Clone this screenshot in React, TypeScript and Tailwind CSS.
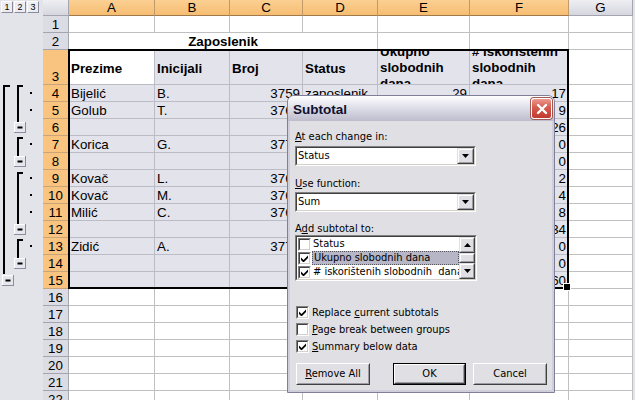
import React from "react";

type Cell = { t?: string; r?: boolean; b?: boolean; w?: boolean };

const COLW = ["w-[86px]", "w-[75px]", "w-[73px]", "w-[75px]", "w-[92px]", "w-[99px]", "w-[64px]"];
const LETTERS = ["A", "B", "C", "D", "E", "F", "G"];

const E: Cell = {};
const R = (t: string): Cell => ({ t, r: true });
const L = (t: string): Cell => ({ t });
const B = (t: string): Cell => ({ t, b: true });

const DATA: Record<number, Cell[]> = {
  3: [
    B("Prezime"),
    B("Inicijali"),
    B("Broj"),
    B("Status"),
    { t: "Ukupno slobodnih dana", b: true, w: true },
    { t: "# iskorištenih slobodnih dana", b: true, w: true },
  ],
  4: [L("Bijelić"), L("B."), R("3759"), L("zaposlenik"), R("29"), R("17")],
  5: [L("Golub"), L("T."), R("3766"), L("zaposlenik"), R("30"), R("9")],
  6: [E, E, E, B("zaposlenik Total"), R("59"), R("26")],
  7: [L("Korica"), L("G."), R("3771"), L("student"), R("10"), R("0")],
  8: [E, E, E, B("student Total"), R("10"), R("0")],
  9: [L("Kovač"), L("L."), R("3762"), L("ugovor"), R("25"), R("2")],
  10: [L("Kovač"), L("M."), R("3764"), L("ugovor"), R("25"), R("4")],
  11: [L("Milić"), L("C."), R("3768"), L("ugovor"), R("25"), R("8")],
  12: [E, E, E, B("ugovor Total"), R("75"), R("34")],
  13: [L("Zidić"), L("A."), R("3770"), L("volonter"), R("5"), R("0")],
  14: [E, E, E, B("volonter Total"), R("5"), R("0")],
  15: [E, E, E, B("Grand Total"), R("149"), R("60")],
};

const ROWS = Array.from({ length: 22 }, (_, i) => i + 1);

function HeaderRow() {
  return (
    <div className="flex h-[16px] shrink-0">
      <div className="w-[43px] shrink-0 flex gap-[1px] pl-[1px] pt-[1px] bg-[#e3e3ea]">
        {["1", "2", "3"].map((d) => (
          <div
            key={d}
            className="w-[12px] h-[12px] border border-t-white border-l-white border-r-[#8a8a98] border-b-[#8a8a98] bg-[#ececf2] flex items-center justify-center text-[9px] leading-[9px]"
          >
            {d}
          </div>
        ))}
      </div>
      <div className="w-[26px] shrink-0 border-r border-b border-[#a5a5b0] bg-linear-to-b from-[#eeeef3] to-[#d6d6df]" />
      {LETTERS.map((l, i) => (
        <div
          key={l}
          className={`${COLW[i]} shrink-0 border-r border-b flex items-center justify-center ${
            i < 6
              ? "bg-linear-to-b from-[#fbd092] to-[#f6bd72] border-r-[#c19a6b] border-b-[#a07a4c]"
              : "bg-linear-to-b from-[#eeeef3] to-[#d6d6df] border-[#a5a5b0]"
          }`}
        >
          <span className="leading-[13px]">{l}</span>
        </div>
      ))}
      <div className="w-[2px] shrink-0 bg-[#e3e3ea]" />
    </div>
  );
}

function SheetRow({ n }: { n: number }) {
  const sel = n >= 3 && n <= 15;
  const tall = n === 3;
  const h = tall ? "h-[35px]" : "h-[17px]";
  const cells = DATA[n] || [];

  const renderCell = (i: number) => {
    const c = cells[i] || E;
    const inSel = sel && i <= 5;
    const active = n === 3 && i === 0;
    const bg = inSel && !active ? "bg-[#e3e3eb]" : "bg-white";
    const bc = inSel ? "border-[#bcbcc6]" : "border-[#c0c0c0]";
    const align = c.r ? "justify-end" : "justify-start";
    const v = c.w ? "items-start" : tall ? "items-center pt-[3px]" : "items-end pb-[1px]";
    return (
      <div
        key={i}
        className={`${COLW[i]} ${h} shrink-0 border-r border-b ${bc} ${bg} flex ${v} ${align} px-[2px] overflow-hidden`}
      >
        {c.t ? (
          c.w ? (
            <span className="block -mt-[6px] font-bold leading-[16px] whitespace-normal">{c.t}</span>
          ) : (
            <span className={`leading-[13px] whitespace-nowrap ${c.b ? "font-bold" : ""}`}>{c.t}</span>
          )
        ) : null}
      </div>
    );
  };

  return (
    <div className={`flex shrink-0 ${h}`}>
      <div
        className={`w-[26px] shrink-0 border-r border-b flex items-end justify-center pb-[1px] ${
          sel ? "bg-[#f8c47f] border-r-[#a07a4c] border-b-[#c9a577]" : "bg-[#dcdce4] border-[#a5a5b0]"
        }`}
      >
        <span className="leading-[13px]">{n}</span>
      </div>
      {n === 2 ? (
        <>
          <div className="w-[309px] h-[17px] shrink-0 border-r border-b border-[#c0c0c0] bg-white flex items-end justify-center pb-[1px]">
            <span className="leading-[13px] font-bold">Zaposlenik</span>
          </div>
          {[4, 5, 6].map((i) => renderCell(i))}
        </>
      ) : (
        LETTERS.map((_, i) => renderCell(i))
      )}
      <div className="w-[2px] shrink-0 bg-[#e3e3ea]" />
    </div>
  );
}

function OutBtn({ x, y }: { x: number; y: number }) {
  return (
    <g>
      <rect x={x} y={y} width={12} height={11} fill="#8c8c9c" />
      <rect x={x} y={y} width={11} height={10} fill="#ffffff" />
      <rect x={x + 1} y={y + 1} width={10} height={9} fill="#e6e6ee" />
      <rect x={x + 3.5} y={y + 4.5} width={5} height={2} fill="#000" />
    </g>
  );
}

function Gutter() {
  const o = 16;
  const groups = [
    { top: 85, btn: 122 },
    { top: 137, btn: 156 },
    { top: 172, btn: 224 },
    { top: 239, btn: 258 },
  ];
  const dots = [4, 5, 7, 9, 10, 11, 13];
  return (
    <div className="w-[43px] shrink-0 bg-[#e3e3ea]">
      <svg width="43" height="384" viewBox="0 0 43 384">
        <rect x={3} y={85 - o} width={2} height={274 - 85} fill="#000" />
        <rect x={3} y={85 - o} width={7} height={2} fill="#000" />
        <OutBtn x={2} y={275 - o} />
        {groups.map((g, i) => (
          <g key={i}>
            <rect x={17} y={g.top - o} width={2} height={g.btn - g.top} fill="#000" />
            <rect x={17} y={g.top - o} width={6} height={2} fill="#000" />
            <OutBtn x={14} y={g.btn - o} />
          </g>
        ))}
        {dots.map((r) => (
          <rect key={r} x={30} y={85 + (r - 4) * 17 + 7 - o} width={2} height={2} fill="#000" />
        ))}
      </svg>
    </div>
  );
}

function Sunken({ className, children }: { className: string; children?: React.ReactNode }) {
  return (
    <div className={`shrink-0 border border-t-[#808080] border-l-[#808080] border-r-white border-b-white ${className}`}>
      <div className="w-full h-full border border-t-[#404040] border-l-[#404040] border-r-[#d4d0c8] border-b-[#d4d0c8] flex bg-white">
        {children}
      </div>
    </div>
  );
}

function Raised({ className, children }: { className: string; children?: React.ReactNode }) {
  return (
    <div className={`shrink-0 border border-t-[#e0dfe3] border-l-[#e0dfe3] border-r-[#404040] border-b-[#404040] ${className}`}>
      <div className="w-full h-full border border-t-white border-l-white border-r-[#9c9ca4] border-b-[#9c9ca4] bg-[#e0dfe3] flex items-center justify-center">
        {children}
      </div>
    </div>
  );
}

function Arrow({ up = false }: { up?: boolean }) {
  return (
    <svg width="7" height="4" viewBox="0 0 7 4">
      {up ? <polygon points="0,4 7,4 3.5,0" fill="#000" /> : <polygon points="0,0 7,0 3.5,4" fill="#000" />}
    </svg>
  );
}

function Check({ on }: { on: boolean }) {
  return (
    <div className="w-[13px] h-[13px] shrink-0 border border-t-[#808080] border-l-[#808080] border-r-white border-b-white">
      <div className="w-full h-full border border-t-[#404040] border-l-[#404040] border-r-[#d4d0c8] border-b-[#d4d0c8] bg-white flex items-center justify-center">
        {on && (
          <svg width="7" height="7" viewBox="0 0 7 7">
            <path d="M0 2.5L2.5 5L7 0.5V3L2.5 7.5L0 5Z" fill="#000" />
          </svg>
        )}
      </div>
    </div>
  );
}

function Combo({ text }: { text: string }) {
  return (
    <Sunken className="w-[181px] h-[20px]">
      <div className="flex-1 flex items-center pl-[1px]">
        <span className="leading-[12px]">{text}</span>
      </div>
      <Raised className="w-[17px] h-full">
        <Arrow />
      </Raised>
    </Sunken>
  );
}

function ListItem({ on, text, hl = false }: { on: boolean; text: string; hl?: boolean }) {
  return (
    <div className="h-[14px] flex items-center">
      <div className="ml-[1px]">
        <Check on={on} />
      </div>
      <div
        className={`ml-[1px] flex-1 h-[14px] flex items-center pl-[1px] whitespace-pre ${
          hl ? "bg-[#b6b6c6] border border-dotted border-[#55555f]" : ""
        }`}
      >
        <span className="leading-[12px]">{text}</span>
      </div>
    </div>
  );
}

function Btn({ children, w, def = false }: { children: React.ReactNode; w: string; def?: boolean }) {
  const inner = (
    <div className="w-full h-full border border-t-white border-l-white border-r-[#404040] border-b-[#404040]">
      <div className="w-full h-full border border-t-[#e0dfe3] border-l-[#e0dfe3] border-r-[#9c9ca4] border-b-[#9c9ca4] bg-[#e0dfe3] flex items-center justify-center">
        <span className="leading-[12px]">{children}</span>
      </div>
    </div>
  );
  return <div className={`${w} h-[22px] shrink-0 ${def ? "border border-black" : ""}`}>{inner}</div>;
}

function CheckRow({ on, children }: { on: boolean; children: React.ReactNode }) {
  return (
    <div className="h-[17px] flex items-center ml-[1px]">
      <Check on={on} />
      <span className="ml-[3px] leading-[12px]">{children}</span>
    </div>
  );
}

function Dialog() {
  return (
    <div className="absolute left-[287px] top-[95px] w-[268px] h-[298px] rounded-t-[7px] border border-[#7f7f99] bg-[#cfcfdc] flex flex-col overflow-hidden">
      <div className="h-[25px] shrink-0 flex items-center justify-between pl-[5px] pr-[2px] bg-[linear-gradient(to_bottom,#ffffff_0%,#ededf3_25%,#d6d6e2_60%,#bcbccd_100%)]">
        <span className="font-['Liberation_Sans',Arial,sans-serif] font-bold text-[13.5px] leading-[15px] text-[#101030] pt-[1px]">
          Subtotal
        </span>
        <div className="w-[21px] h-[21px] rounded-[3px] border border-white bg-[linear-gradient(to_bottom,#ec9a8f,#d65a4e_45%,#c23a2f)] shadow-[0_0_0_1px_#a05a55] flex items-center justify-center">
          <svg width="12" height="12" viewBox="0 0 12 12">
            <path d="M2 2L10 10M10 2L2 10" stroke="#fff" strokeWidth="2.4" strokeLinecap="round" />
          </svg>
        </div>
      </div>
      <div className="flex-1 mx-[2px] mb-[2px] bg-[#e0dfe3] flex flex-col pl-[5px] pt-[10px] font-['DejaVu_Sans_Condensed','DejaVu_Sans',sans-serif] font-stretch-condensed text-[11px] text-black">
        <div className="h-[12px] leading-[12px]">
          <span className="underline">A</span>t each change in:
        </div>
        <div className="mt-[3px]">
          <Combo text="Status" />
        </div>
        <div className="mt-[12px] h-[12px] leading-[12px]">
          <span className="underline">U</span>se function:
        </div>
        <div className="mt-[2px]">
          <Combo text="Sum" />
        </div>
        <div className="mt-[11px] h-[12px] leading-[12px]">
          A<span className="underline">d</span>d subtotal to:
        </div>
        <Sunken className="w-[182px] h-[46px]">
          <div className="flex-1 flex flex-col overflow-hidden">
            <ListItem on={false} text="Status" />
            <ListItem on text="Ukupno slobodnih dana" hl />
            <ListItem on text="# iskorištenih slobodnih  dana" />
          </div>
          <div className="w-[16px] flex flex-col">
            <Raised className="w-[16px] h-[16px]">
              <Arrow up />
            </Raised>
            <div className="h-[10px] bg-[#f0f0f3]">
              <Raised className="w-[16px] h-[10px]" />
            </div>
            <Raised className="w-[16px] h-[16px]">
              <Arrow />
            </Raised>
          </div>
        </Sunken>
        <div className="mt-[23px] flex flex-col">
          <CheckRow on>
            Replace <span className="underline">c</span>urrent subtotals
          </CheckRow>
          <CheckRow on={false}>
            <span className="underline">P</span>age break between groups
          </CheckRow>
          <CheckRow on>
            <span className="underline">S</span>ummary below data
          </CheckRow>
        </div>
        <div className="mt-[8px] flex ml-[1px]">
          <Btn w="w-[74px]">
            <span className="underline">R</span>emove All
          </Btn>
          <div className="ml-[23px]">
            <Btn w="w-[73px]" def>
              OK
            </Btn>
          </div>
          <div className="ml-[7px]">
            <Btn w="w-[74px]">Cancel</Btn>
          </div>
        </div>
      </div>
    </div>
  );
}

export default function App() {
  return (
    <div className="relative w-[635px] h-[400px] overflow-hidden bg-[#e3e3ea] font-['Liberation_Sans',Arial,sans-serif] text-[13.33px] text-black">
      <HeaderRow />
      <div className="flex">
        <Gutter />
        <div className="flex flex-col">
          {ROWS.map((n) => (
            <SheetRow key={n} n={n} />
          ))}
        </div>
      </div>
      <div className="absolute left-[68px] top-[49px] w-[501px] h-[240px] border-2 border-black pointer-events-none" />
      <div className="absolute left-[563px] top-[283px] w-[8px] h-[8px] bg-black border border-white" />
      <Dialog />
    </div>
  );
}
